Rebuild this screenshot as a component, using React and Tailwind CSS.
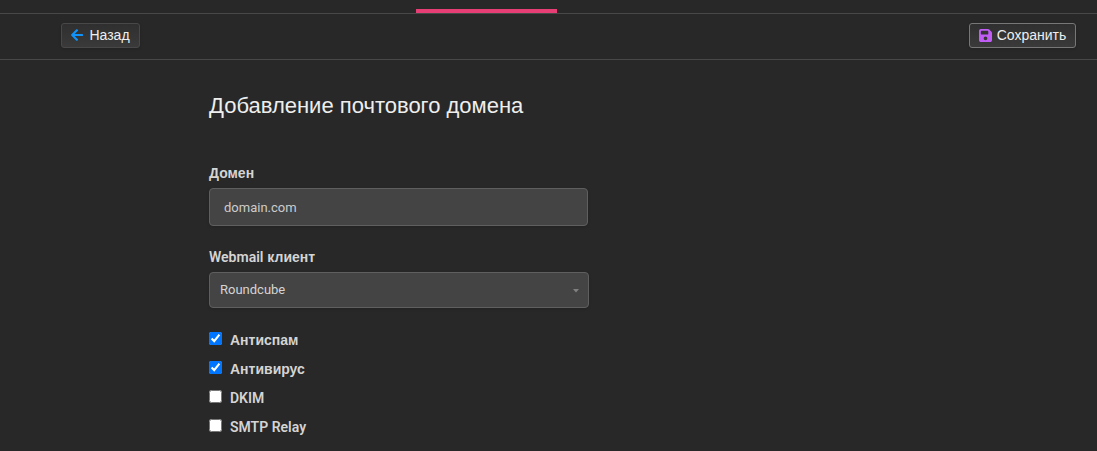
import React, { useState } from "react";
import { FaArrowLeft } from "react-icons/fa";
import { FaFloppyDisk } from "react-icons/fa6";

const webmailClients = ["Roundcube", "Rainloop", "Disabled"];

const options = [
  { name: "antispam", label: "Антиспам" },
  { name: "antivirus", label: "Антивирус" },
  { name: "dkim", label: "DKIM" },
  { name: "relay", label: "SMTP Relay" },
];

const Toolbar = () => {
  return (
    <div className="flex items-center justify-between h-[46px] pl-[61px] pr-[21px] pb-[2px] border-b border-[#484848]">
      <button
        type="button"
        className="flex items-center justify-center gap-[6px] w-[79px] h-[25px] pb-px rounded-[3px] border border-[#484848] bg-linear-to-b from-[#2f2f2f] to-[#3a3a3a] text-sm leading-5 text-[#eeeeee] shadow-sm"
      >
        <FaArrowLeft className="w-[12px] h-[14px] text-[#0f94fb]" />
        Назад
      </button>
      <button
        type="submit"
        form="mail-domain"
        className="flex items-center justify-center gap-[5px] w-[107px] h-[25px] pb-px rounded-[3px] border border-[#777777] bg-linear-to-b from-[#2f2f2f] to-[#3a3a3a] text-sm leading-5 text-[#eeeeee] shadow-sm"
      >
        <FaFloppyDisk className="w-[13px] h-[15px] text-[#c05df5]" />
        Сохранить
      </button>
    </div>
  );
};

const App = () => {
  const [form, setForm] = useState({
    domain: "domain.com",
    webmail: "Roundcube",
    antispam: true,
    antivirus: true,
    dkim: false,
    relay: false,
  });

  const handleChange = (e) => {
    const { name, type, value, checked } = e.target;
    setForm({ ...form, [name]: type === "checkbox" ? checked : value });
  };

  const handleSubmit = (e) => {
    e.preventDefault();
  };

  return (
    <div className="min-h-screen bg-[#282828] font-['Liberation_Sans',Arial,sans-serif] text-[#d4d4d4]">
      {/* Bottom edge of the menu with the active tab */}
      <div className="flex items-end h-[14px] pl-[416px] border-b border-[#484848]">
        <div className="w-[141px] h-[4px] bg-[#e83e76]"></div>
      </div>
      <Toolbar />

      <form
        id="mail-domain"
        onSubmit={handleSubmit}
        className="pl-[209px] pr-5 pt-8 pb-3"
      >
        <h1 className="text-[22px] leading-7 text-[#eeeeee]">
          Добавление почтового домена
        </h1>

        <div className="mt-[43px] max-w-[379px]">
          <label htmlFor="domain" className="block text-sm leading-5 font-bold">
            Домен
          </label>
          <input
            type="text"
            id="domain"
            name="domain"
            value={form.domain}
            onChange={handleChange}
            className="block mt-[5px] w-full h-[38px] px-[14px] rounded-[4px] border border-[#5f5f5f] bg-[#444444] font-['Roboto','Liberation_Sans',sans-serif] text-[13px] text-[#cccccc] shadow-sm"
          />
        </div>

        <div className="mt-[21px] max-w-[380px]">
          <label
            htmlFor="webmail"
            className="block text-sm leading-5 font-bold"
          >
            <span className="font-['Roboto',sans-serif] font-semibold">Webmail</span> клиент
          </label>
          <div className="relative mt-[5px]">
            <select
              id="webmail"
              name="webmail"
              value={form.webmail}
              onChange={handleChange}
              className="block w-full h-[36px] px-[10px] appearance-none rounded-[4px] border border-[#5f5f5f] bg-[#444444] font-['Roboto','Liberation_Sans',sans-serif] text-[13px] text-[#d4d4d4] shadow-sm"
            >
              {webmailClients.map((client) => (
                <option key={client} value={client}>
                  {client}
                </option>
              ))}
            </select>
            <svg
              viewBox="0 0 6 4"
              className="absolute right-[10px] top-[17px] w-[6px] h-[4px] fill-[#808080] pointer-events-none"
            >
              <path d="M0 0h6L3 3.5z" />
            </svg>
          </div>
        </div>

        <div className="mt-[22px]">
          {options.map((option) => (
            <div key={option.name} className="flex items-start gap-2 h-[29px]">
              <input
                type="checkbox"
                id={option.name}
                name={option.name}
                checked={form[option.name]}
                onChange={handleChange}
                className="mt-[2px] w-[13px] h-[13px]"
              />
              <label
                htmlFor={option.name}
                className={
                  /^[A-Z]/.test(option.label)
                    ? "font-['Roboto',sans-serif] text-sm leading-5 font-semibold"
                    : "text-sm leading-5 font-bold"
                }
              >
                {option.label}
              </label>
            </div>
          ))}
        </div>
      </form>
    </div>
  );
};

export default App;
